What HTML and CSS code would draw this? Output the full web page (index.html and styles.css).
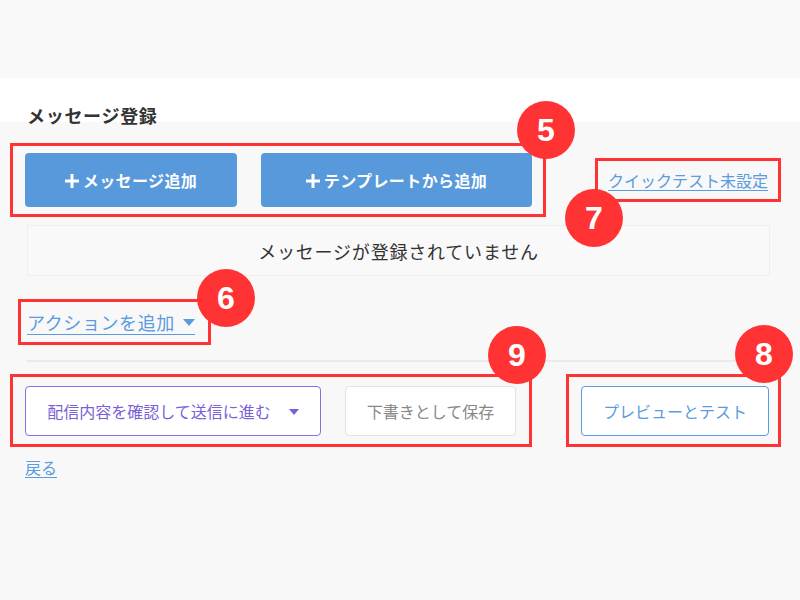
FILE: index.html
```html
<!DOCTYPE html>
<html lang="ja">
<head>
	<meta charset="utf-8">
	<title>メッセージ登録</title>
	<link rel="stylesheet" href="styles.css">
</head>
<body>
	<div class="topbar"></div>
	<div class="pagehead">
		<h2 class="title">メッセージ登録</h2>
	</div>
	<main class="content">
		<div class="row">
			<div class="annot annot-add">
				<span class="badge badge-5">5</span>
				<button class="btn btn-primary btn-msg"><svg class="plus" width="14" height="14" viewBox="0 0 14 14"><path d="M7 0v14M0 7h14" stroke="currentColor" stroke-width="3"/></svg>メッセージ追加</button>
				<button class="btn btn-primary btn-tpl"><svg class="plus" width="14" height="14" viewBox="0 0 14 14"><path d="M7 0v14M0 7h14" stroke="currentColor" stroke-width="3"/></svg>テンプレートから追加</button>
			</div>
			<div class="annot annot-quick">
				<span class="badge badge-7">7</span>
				<a class="link" href="#">クイックテスト未設定</a>
			</div>
		</div>

		<div class="empty">メッセージが登録されていません</div>

		<div class="annot annot-action">
			<span class="badge badge-6">6</span>
			<a class="link link-action" href="#">アクションを追加 <svg class="caret" width="12" height="8" viewBox="0 0 12 8"><path d="M0 0h12L6 7z" fill="currentColor"/></svg></a>
		</div>

		<div class="divider"></div>

		<div class="row">
			<div class="annot annot-send">
				<span class="badge badge-9">9</span>
				<button class="btn btn-send">配信内容を確認して送信に進む <svg class="caret-sm" width="10" height="6" viewBox="0 0 10 6"><path d="M0 0h10L5 6z" fill="currentColor"/></svg></button>
				<button class="btn btn-draft">下書きとして保存</button>
			</div>
			<div class="annot annot-preview">
				<span class="badge badge-8">8</span>
				<button class="btn btn-preview">プレビューとテスト</button>
			</div>
		</div>

		<a class="back" href="#">戻る</a>
	</main>
</body>
</html>
```

FILE: styles.css
```css
html, body { margin: 0; padding: 0; }
body { background-color: #f8f8f8; font-family: "Noto Sans CJK JP", "Liberation Sans", sans-serif; color: #333; }

.topbar { height: 78px; background-color: #f9f9f9; }
.pagehead { height: 44px; background-color: #fff; padding: 0 0 0 27px; box-sizing: border-box; }
.title { margin: 0; padding-top: 24px; font-size: 18px; line-height: 26px; font-weight: bold; color: #333; letter-spacing: 0.7px; }

.content { padding: 21px 30px 40px 25px; }
.row { display: flex; align-items: center; justify-content: space-between; margin: 0 -11px 0 -15px; }

/* red annotation frames */
.annot { position: relative; border: 3px solid #ff3333; box-sizing: border-box; }
.badge { position: absolute; z-index: 2; width: 58px; height: 58px; border-radius: 50%; background-color: #ff3333; color: #fff; font-family: "Liberation Sans", Arial, sans-serif; font-weight: bold; font-size: 32px; line-height: 58px; text-align: center; }

.annot-add { display: flex; gap: 24px; padding: 7px 11px 0 12px; height: 74px; }
.badge-5 { top: -45px; right: -32px; }
.annot-quick { padding: 0 10px; height: 44px; display: flex; align-items: center; margin-left: auto; }
.badge-7 { left: -33px; top: 28px; }

.btn { font-family: "Noto Sans CJK JP", sans-serif; font-size: 16px; border-radius: 4px; cursor: pointer; box-sizing: border-box; }
.btn-primary { height: 54px; border: none; background-color: #5899db; color: #fff; font-weight: bold; letter-spacing: 0.4px; display: flex; align-items: center; justify-content: center; gap: 4px; }
.plus { margin-top: 1px; }
.btn-msg { width: 212px; }
.btn-tpl { width: 271px; }

.link { color: #5b9be0; text-decoration: underline; text-underline-offset: 3px; font-size: 16px; line-height: 22px; }

.empty { margin: 8px 0 0 2px; height: 51px; border: 1px solid #efefef; box-sizing: border-box; background-color: #f9f9f9; display: flex; align-items: center; justify-content: center; font-size: 18px; letter-spacing: 0.8px; color: #333; }

.annot-action { display: inline-block; margin: 23px 0 0 -7px; padding: 8px 13px 6px 6px; height: 46px; }
.link-action { font-size: 18px; line-height: 24px; display: inline-flex; align-items: center; gap: 8px; letter-spacing: 0.6px; text-decoration: none; border-bottom: 1px solid #5b9be0; }
.caret { margin-top: 1px; }
.badge-6 { top: -33px; right: -47px; }

.divider { margin: 15px 0 0 2px; height: 2px; background-color: #ebebeb; }

.annot-send, .annot-preview { display: flex; align-items: center; gap: 24px; height: 73px; padding: 0 13px 0 12px; margin-top: 12px; }
.annot-send { width: 522px; }
.annot-preview { width: 215px; padding-right: 9px; }
.badge-9 { top: -51px; right: -17px; }
.badge-8 { top: -52px; right: -15px; }

.btn-send { width: 296px; height: 50px; background-color: #fff; border: 1px solid #8a6ee6; color: #7b5fd8; display: flex; align-items: center; justify-content: center; gap: 18px; padding-left: 6px; }
.caret-sm { margin-top: 2px; }
.btn-draft { width: 171px; height: 50px; background-color: #fff; border: 1px solid #e2e2e2; color: #888; }
.btn-preview { width: 188px; height: 50px; background-color: #fff; border: 1px solid #5b9be0; color: #5b9be0; }

.back { display: inline-block; margin-top: 10px; color: #5b9be0; font-size: 16px; line-height: 20px; text-decoration: underline; text-underline-offset: 3px; }
```
